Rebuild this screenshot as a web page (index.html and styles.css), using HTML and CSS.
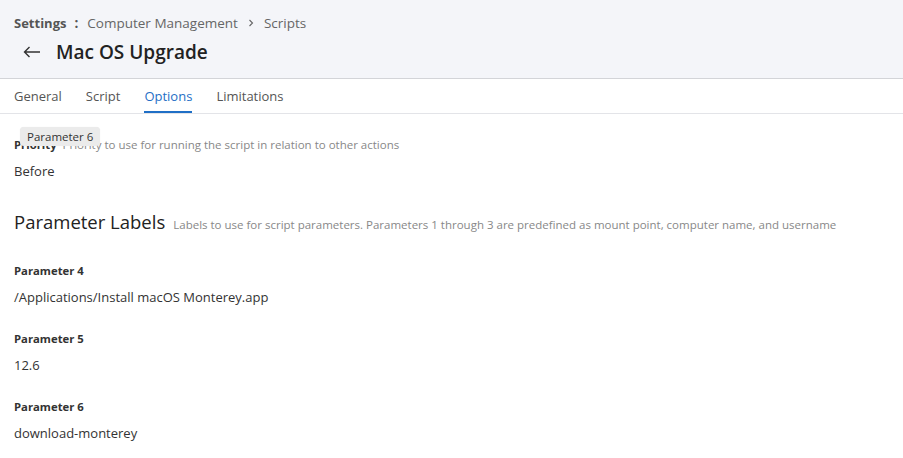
FILE: index.html
```html
<!DOCTYPE html>
<html>
<head>
<meta charset="utf-8">
<link rel="stylesheet" href="styles.css">
</head>
<body>
<header class="header">
  <div class="crumbs">
    <span class="crumb-root">Settings</span>
    <span class="crumb-sep colon">:</span>
    <span class="crumb">Computer Management</span>
    <span class="crumb-sep">
      <svg width="8" height="8" viewBox="0 0 8 8"><path d="M2.5 1 L5.5 4 L2.5 7" fill="none" stroke="#666" stroke-width="1.1"/></svg>
    </span>
    <span class="crumb">Scripts</span>
  </div>
  <div class="title-row">
    <svg class="back" width="18" height="12" viewBox="0 0 18 12"><path d="M17 6 H1.5 M6.5 1 L1.5 6 L6.5 11" fill="none" stroke="#333" stroke-width="1.4"/></svg>
    <h1 class="title">Mac OS Upgrade</h1>
  </div>
</header>
<nav class="tabs">
  <span class="tab">General</span>
  <span class="tab">Script</span>
  <span class="tab active">Options</span>
  <span class="tab">Limitations</span>
</nav>
<main class="content">
  <div class="field">
    <div class="label-row"><span class="label">Priority</span><span class="desc">Priority to use for running the script in relation to other actions</span></div>
    <div class="value">Before</div>
    <div class="tooltip">Parameter 6</div>
  </div>
  <div class="section-head">
    <h2 class="section-title">Parameter Labels</h2>
    <span class="desc">Labels to use for script parameters. Parameters 1 through 3 are predefined as mount point, computer name, and username</span>
  </div>
  <div class="field param">
    <div class="label">Parameter 4</div>
    <div class="value">/Applications/Install macOS Monterey.app</div>
  </div>
  <div class="field param">
    <div class="label">Parameter 5</div>
    <div class="value">12.6</div>
  </div>
  <div class="field param">
    <div class="label">Parameter 6</div>
    <div class="value">download-monterey</div>
  </div>
</main>
</body>
</html>
```
FILE: styles.css
```css
* { box-sizing: border-box; }
body {
  margin: 0;
  font-family: "Open Sans", "Lato", sans-serif;
  color: #222;
  background: #fff;
}
.header {
  background: #f4f5f9;
  border-bottom: 1px solid #d3d4d8;
  height: 79px;
  padding: 14px 14px 0;
}
.crumbs {
  display: flex;
  align-items: center;
  font-size: 13.5px;
  color: #666;
  height: 18px;
}
.crumb-root { font-weight: 700; color: #555; font-size: 13px; }
.crumb-sep { display: flex; align-items: center; margin: 0 9px; }
.colon { font-weight: 700; color: #555; margin: 0 9px 0 8px; }
.title-row {
  display: flex;
  align-items: center;
  margin-top: 8px;
  padding-left: 9px;
}
.back { margin-right: 15px; }
.title {
  margin: 0;
  font-size: 19px;
  font-weight: 600;
  color: #222;
  line-height: 24px;
}
.tabs {
  display: flex;
  gap: 24px;
  padding: 0 14px;
  border-bottom: 1px solid #e3e4e8;
  height: 35px;
}
.tab {
  font-size: 13px;
  color: #555;
  line-height: 34px;
  border-bottom: 2px solid transparent;
}
.tab.active { color: #1f6fc6; border-bottom-color: #1f6fc6; }
.content { padding: 0 14px; }
.field { position: relative; }
.label-row { display: flex; align-items: baseline; gap: 6px; padding-top: 23px; }
.label {
  font-size: 11.3px;
  font-weight: 700;
  color: #333;
  line-height: 15px;
}
.param > .label { padding-top: 28px; }
.param + .param > .label { padding-top: 25px; }
.desc { font-size: 11.5px; color: #888; }
.value {
  font-size: 13px;
  color: #333;
  margin-top: 10px;
  line-height: 18px;
}
.tooltip {
  position: absolute;
  left: 6px;
  top: 13px;
  background: #ebebeb;
  border-radius: 4px;
  font-size: 11.5px;
  color: #333;
  padding: 2px 7px;
  line-height: 15px;
  box-shadow: 0 0 1px rgba(0,0,0,0.1);
}
.section-head {
  display: flex;
  align-items: baseline;
  gap: 8px;
  margin-top: 29px;
}
.section-title {
  margin: 0;
  font-size: 18.5px;
  font-weight: 400;
  color: #222;
  line-height: 26px;
}
```
